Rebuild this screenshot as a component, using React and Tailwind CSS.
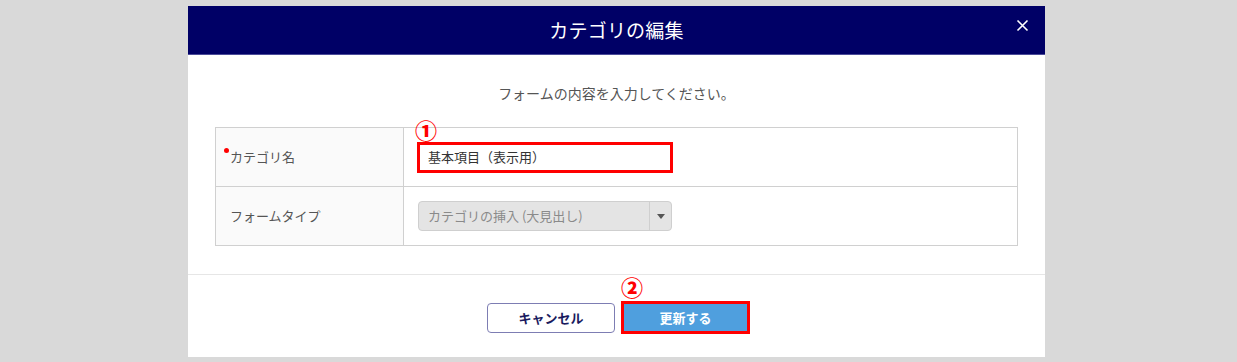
import React from 'react';

const jp = { fontFamily: '"Noto Sans CJK JP", "Noto Sans", sans-serif' };

const App = () => {
  return (
    <div className="w-[1237px] h-[362px] bg-[#d9d9d9] pt-[6px] overflow-hidden" style={jp}>
      <div className="ml-[188px] w-[857px] h-[351px] bg-white flex flex-col">
        {/* Header */}
        <div className="relative h-[49px] bg-[#000066] border-b border-[#4b4b99] flex items-center justify-center">
          <h2 className="text-[19px] text-white tracking-[0.01em]">カテゴリの編集</h2>
          <button className="absolute right-[16px] top-[13px] text-white">
            <svg width="13" height="13" viewBox="0 0 13 13" fill="none" stroke="currentColor" strokeWidth="1.6">
              <path d="M1.5 1.5 L11.5 11.5 M11.5 1.5 L1.5 11.5" />
            </svg>
          </button>
        </div>

        {/* Body */}
        <div className="px-[27px] pt-[28px]">
          <p className="text-center text-[14px] text-[#555] leading-[20px]">フォームの内容を入力してください。</p>

          <div className="mt-[24px] border border-[#d0d0d0]">
            {/* Row 1 */}
            <div className="flex h-[59px] border-b border-[#d0d0d0]">
              <div className="w-[188px] shrink-0 bg-[#fafafa] border-r border-[#d0d0d0] flex items-center pl-[14px]">
                <span className="relative text-[13px] text-[#555]">
                  <span className="absolute -left-[6px] top-[1px] w-[5px] h-[5px] rounded-full bg-[#ff0000]"></span>
                  カテゴリ名
                </span>
              </div>
              <div className="relative flex items-center pl-[13px]">
                <span className="absolute left-[11px] -top-[10px] text-[#ff0000] text-[22px] font-black leading-none">①</span>
                <div className="w-[256px] h-[31px] border-[3px] border-[#ff0000] bg-white flex items-center pl-[8px] text-[13px] text-[#333]">
                  基本項目（表示用）
                </div>
              </div>
            </div>
            {/* Row 2 */}
            <div className="flex h-[58px]">
              <div className="w-[188px] shrink-0 bg-[#fafafa] border-r border-[#d0d0d0] flex items-center pl-[14px]">
                <span className="text-[13px] text-[#555]">フォームタイプ</span>
              </div>
              <div className="flex items-center pl-[14px]">
                <div className="w-[254px] h-[30px] bg-[#e4e4e4] border border-[#cfcfcf] rounded-[4px] flex items-center">
                  <span className="flex-1 pl-[9px] text-[13px] text-[#8a8a8a]">カテゴリの挿入 (大見出し)</span>
                  <div className="w-[22px] h-full border-l border-[#cfcfcf] flex items-center justify-center">
                    <svg width="8" height="5" viewBox="0 0 8 5">
                      <path d="M0 0 L8 0 L4 5 Z" fill="#555" />
                    </svg>
                  </div>
                </div>
              </div>
            </div>
          </div>
        </div>

        {/* Footer */}
        <div className="mt-[28px] border-t border-[#e6e6e6] flex justify-center items-start pt-[26px] gap-[6px] pl-[4px]">
          <button className="mt-[2px] w-[128px] h-[30px] border border-[#7d7db3] rounded-[4px] bg-white text-[13px] font-bold text-[#1a1a5e]">
            キャンセル
          </button>
          <div className="relative">
            <span className="absolute left-[0px] -top-[26px] text-[#ff0000] text-[22px] font-black leading-none">②</span>
            <div className="w-[129px] h-[33px] border-[3px] border-[#ff0000] bg-[#4f9fde] flex items-center justify-center text-[13px] font-bold text-white">
              更新する
            </div>
          </div>
        </div>
      </div>
    </div>
  );
};

export default App;
